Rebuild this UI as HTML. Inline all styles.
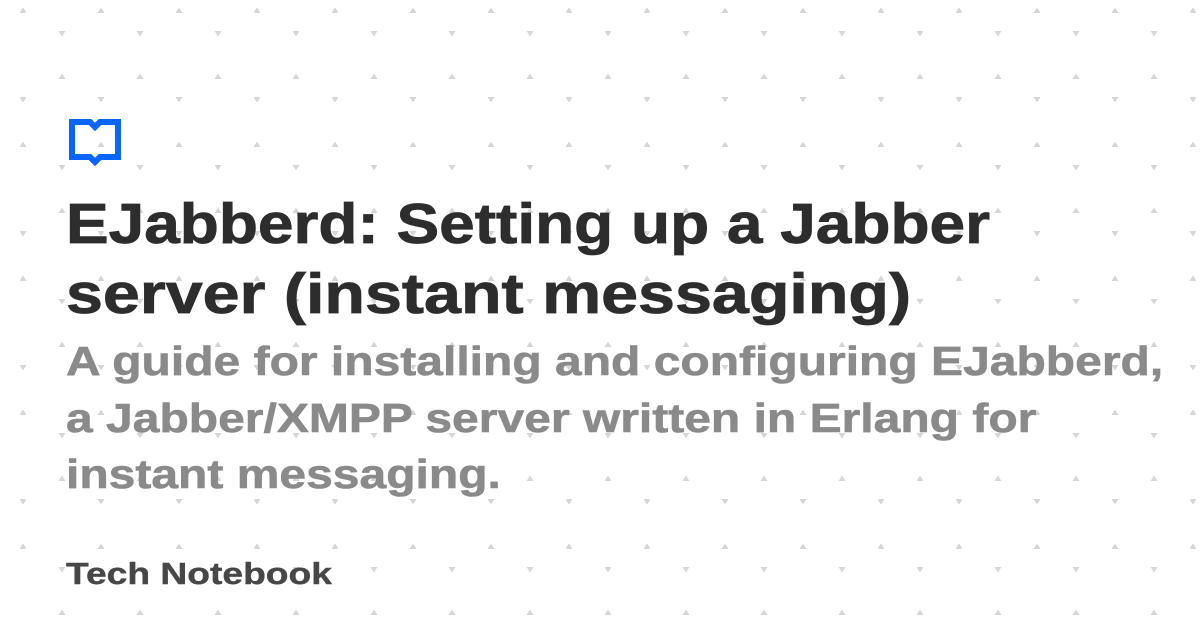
<!DOCTYPE html>
<html><head><meta charset="utf-8"><style>
html,body{margin:0;padding:0}
body{width:1200px;height:630px;overflow:hidden;background:#fff;position:relative;font-family:"Liberation Sans",sans-serif;font-weight:bold}
svg.bg{position:absolute;left:0;top:0}
.l{position:absolute;left:66px;white-space:nowrap;line-height:1;transform-origin:0 0}
.t{font-size:57px;color:#2d2d2d;-webkit-text-stroke:0.8px #2d2d2d}
.s{font-size:41px;color:#8a8a8a;-webkit-text-stroke:0.6px #8a8a8a;transform:scaleX(1.171)}
.b{font-size:31px;color:#474747;-webkit-text-stroke:0.4px #474747;transform:scaleX(1.2)}
</style></head><body>
<svg class="bg" width="1200" height="630">
<defs><pattern id="p" width="78" height="134" patternUnits="userSpaceOnUse" x="0" y="0">
<path d="M19.5 13 L23 7.5 L26.5 13Z" fill="#d3d6da"/>
<path d="M58.5 79 L62 73.5 L65.5 79Z" fill="#d3d6da"/>
<path d="M58.5 31 L62 36.5 L65.5 31Z" fill="#d3d6da"/>
<path d="M19.5 97 L23 102.5 L26.5 97Z" fill="#d3d6da"/>
</pattern></defs>
<rect width="1200" height="630" fill="url(#p)"/>
<path d="M72 122 H90 L95 127 L100 122 H118 V157 H100 L95 162 L90 157 H72 Z" fill="none" stroke="#0866ff" stroke-width="6" stroke-linejoin="miter"/>
</svg>
<div class="l t" style="top:196px;transform:scaleX(1.122)">EJabberd: Setting up a Jabber</div>
<div class="l t" style="top:266px;transform:scaleX(1.165)">server (instant messaging)</div>
<div class="l s" style="top:341px">A guide for installing and configuring EJabberd,</div>
<div class="l s" style="top:398px">a Jabber/XMPP server written in Erlang for</div>
<div class="l s" style="top:454px">instant messaging.</div>
<div class="l b" style="top:558px">Tech Notebook</div>
</body></html>
